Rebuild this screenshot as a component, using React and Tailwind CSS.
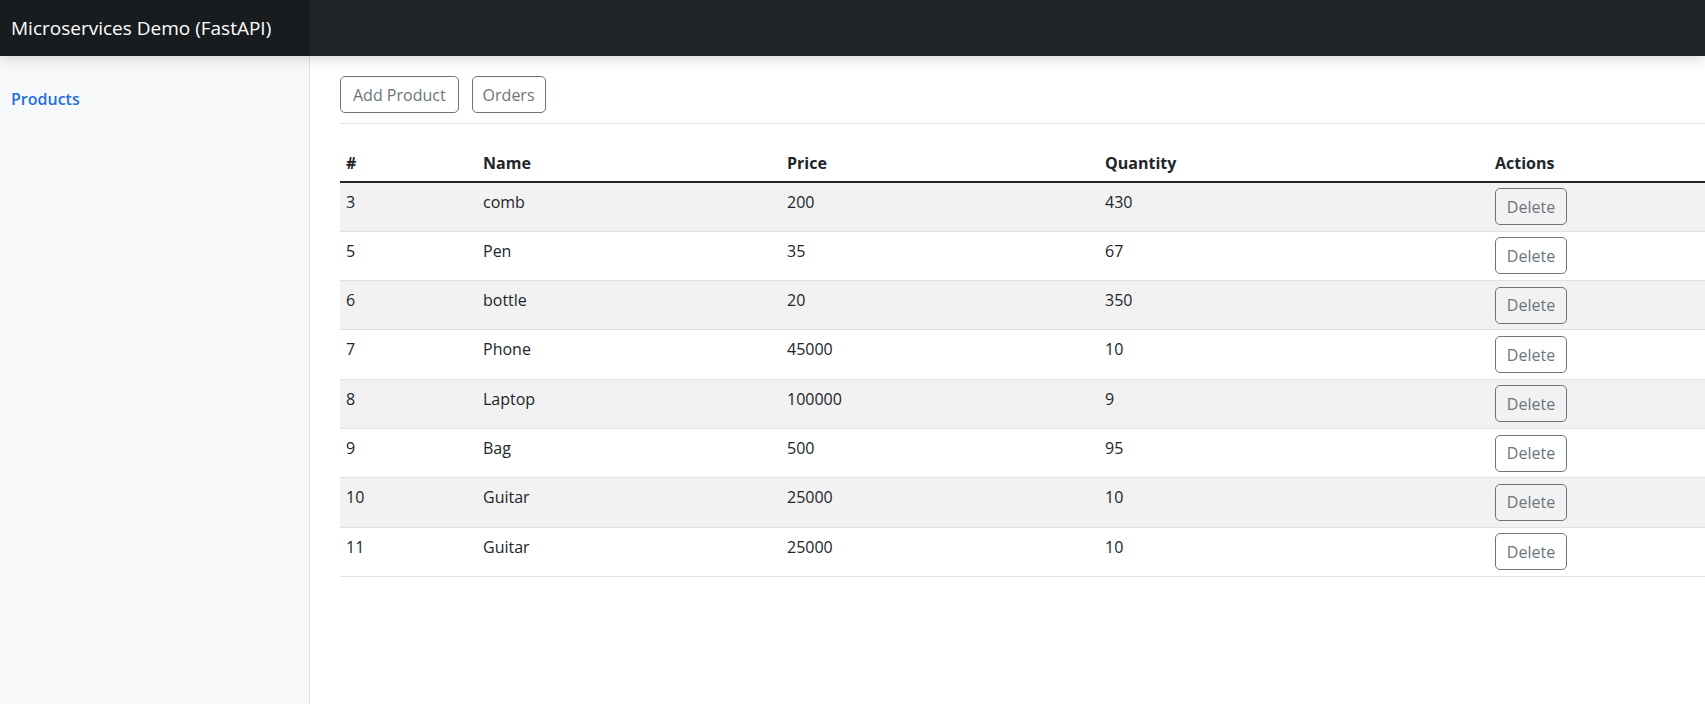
import React from "react";

const products = [
  { id: 3, name: "comb", price: 200, quantity: 430 },
  { id: 5, name: "Pen", price: 35, quantity: 67 },
  { id: 6, name: "bottle", price: 20, quantity: 350 },
  { id: 7, name: "Phone", price: 45000, quantity: 10 },
  { id: 8, name: "Laptop", price: 100000, quantity: 9 },
  { id: 9, name: "Bag", price: 500, quantity: 95 },
  { id: 10, name: "Guitar", price: 25000, quantity: 10 },
  { id: 11, name: "Guitar", price: 25000, quantity: 10 },
];

const App = () => {
  return (
    <div className="h-screen flex flex-col overflow-hidden bg-white text-[#212529] font-['Open_Sans',sans-serif] text-[16px] leading-6">
      {/* top bar */}
      <header className="relative z-10 h-14 flex bg-[#212529] shadow-[0_2px_14px_rgba(0,0,0,0.18)]">
        <div className="w-[310px] h-full flex items-center pl-[11px] bg-[#191c1f] text-white text-[19px]">
          Microservices Demo (FastAPI)
        </div>
      </header>

      <div className="flex flex-1 min-h-0">
        {/* sidebar */}
        <nav className="w-[310px] shrink-0 bg-[#f8f9fa] border-r border-[#dee2e6] pt-[31px] pl-[11px]">
          <a href="#" className="text-[#2470dc] font-semibold">
            Products
          </a>
        </nav>

        {/* main */}
        <main className="flex-1 min-w-0 pl-[30px] pt-5">
          <div className="flex gap-[13px]">
            <button className="h-[37px] px-[12px] border border-[#6c757d] rounded-[5px] text-[#6c757d]">
              Add Product
            </button>
            <button className="h-[37px] px-[10px] border border-[#6c757d] rounded-[5px] text-[#6c757d]">
              Orders
            </button>
          </div>
          <div className="mt-[10px] border-t border-[#dee2e6]" />

          <table className="w-full table-fixed mt-[16px] border-collapse">
            <colgroup>
              <col className="w-[135px]" />
              <col className="w-[304px]" />
              <col className="w-[318px]" />
              <col className="w-[390px]" />
              <col />
            </colgroup>
            <thead>
              <tr className="border-b-2 border-[#212529]">
                <th className="text-left font-bold px-[6px] pt-[10px] pb-[6px] h-[42px]">#</th>
                <th className="text-left font-bold px-[8px] pt-[10px] pb-[6px]">Name</th>
                <th className="text-left font-bold px-[8px] pt-[10px] pb-[6px]">Price</th>
                <th className="text-left font-bold px-[8px] pt-[10px] pb-[6px]">Quantity</th>
                <th className="text-left font-bold px-[8px] pt-[10px] pb-[6px]">Actions</th>
              </tr>
            </thead>
            <tbody>
              {products.map((p, i) => (
                <tr
                  key={p.id}
                  className={`border-b border-[#dee2e6] h-[49.3px] ${i % 2 === 0 ? "bg-[#f2f2f2]" : "bg-white"}`}
                >
                  <td className="align-top px-[6px] pt-[7px]">{p.id}</td>
                  <td className="align-top px-[8px] pt-[7px]">{p.name}</td>
                  <td className="align-top px-[8px] pt-[7px]">{p.price}</td>
                  <td className="align-top px-[8px] pt-[7px]">{p.quantity}</td>
                  <td className="align-middle px-[8px]">
                    <button className="w-[72px] h-[37px] border border-[#6c757d] rounded-[5px] text-[#6c757d]">
                      Delete
                    </button>
                  </td>
                </tr>
              ))}
            </tbody>
          </table>
        </main>
      </div>
    </div>
  );
};

export default App;
